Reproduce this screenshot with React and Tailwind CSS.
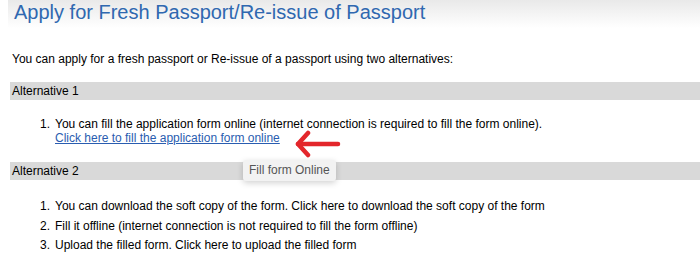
export default function App() {
  return (
    <div
      className="w-[700px] h-[269px] overflow-hidden bg-white text-black"
      style={{ fontFamily: '"Liberation Sans", Arial, sans-serif' }}
    >
      <div className="ml-[8px] h-[28px] bg-gradient-to-b from-[#e9e9e9] to-white pl-[6px]">
        <h1 className="text-[20px] leading-[24px] text-[#2f68b0]">
          Apply for Fresh Passport/Re-issue of Passport
        </h1>
      </div>

      <p className="mt-[23px] ml-[12px] text-[12px] leading-[16px]">
        You can apply for a fresh passport or Re-issue of a passport using two alternatives:
      </p>

      <div className="mt-[15px] ml-[10px] h-[18px] bg-[#d9d9d9] pl-[2px] text-[12px] leading-[18px]">
        Alternative 1
      </div>

      <ol className="mt-[17px] ml-[40px] text-[12px] leading-[14px]">
        <li className="flex">
          <span className="w-[15px] shrink-0">1.</span>
          <div>
            <div>
              You can fill the application form online (internet connection is required to fill the form online).
            </div>
            <div className="relative">
              <a href="#" className="text-[#2a5db0] underline">
                Click here to fill the application form online
              </a>
              <svg
                className="absolute left-[239px] top-[-1px]"
                width="48"
                height="28"
                viewBox="0 0 48 28"
                fill="none"
                stroke="#e3262b"
                strokeWidth="4.5"
                strokeLinecap="round"
                strokeLinejoin="round"
              >
                <path d="M4 14 H44" />
                <path d="M14 3 L4 14 L14 25" />
              </svg>
            </div>
          </div>
        </li>
      </ol>

      <div className="relative mt-[17px] ml-[10px] h-[18px] bg-[#d9d9d9] pl-[2px] text-[12px] leading-[18px]">
        Alternative 2
        <div className="absolute left-[233px] top-[-2px] rounded-[3px] bg-[#f2f2f2] px-[6px] text-[12px] leading-[21px] text-[#555] shadow-[0_2px_6px_rgba(0,0,0,0.18)]">
          Fill form Online
        </div>
      </div>

      <ol className="mt-[17px] ml-[40px] text-[12px] leading-[19.5px]">
        <li className="flex">
          <span className="w-[15px] shrink-0">1.</span>
          <span>You can download the soft copy of the form. Click here to download the soft copy of the form</span>
        </li>
        <li className="flex">
          <span className="w-[15px] shrink-0">2.</span>
          <span>Fill it offline (internet connection is not required to fill the form offline)</span>
        </li>
        <li className="flex">
          <span className="w-[15px] shrink-0">3.</span>
          <span>Upload the filled form. Click here to upload the filled form</span>
        </li>
      </ol>
    </div>
  );
}
